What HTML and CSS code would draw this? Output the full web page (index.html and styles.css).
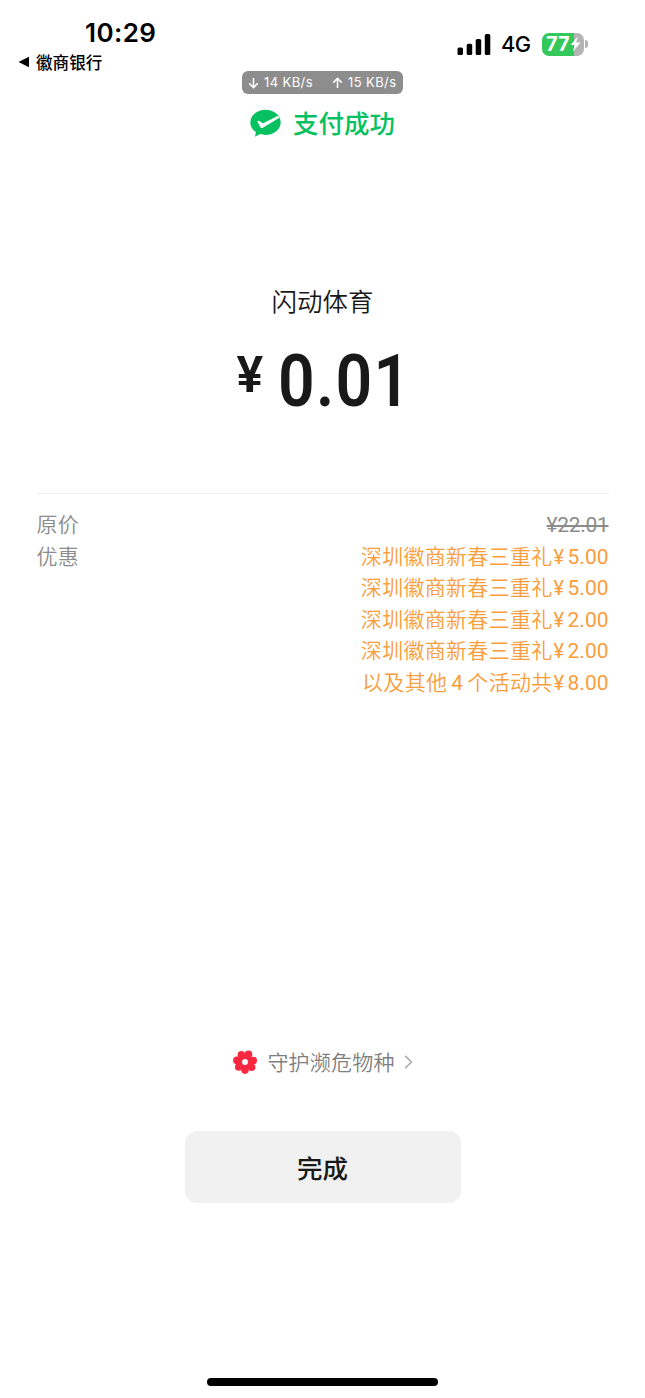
FILE: index.html
```html
<!DOCTYPE html>
<html lang="zh-CN">
<head>
<meta charset="utf-8">
<title>支付成功</title>
<link rel="stylesheet" href="styles.css">
</head>
<body>
<main class="screen">
  <header class="status">
    <div class="status-left">
      <div class="clock">10:29</div>
      <div class="back">
        <svg class="back-arrow" width="12" height="12" viewBox="0 0 12 12"><path d="M0.5 6 11 .8V11.2Z"/></svg>
        <span>徽商银行</span>
      </div>
    </div>
    <div class="status-right">
      <svg class="signal" width="34" height="21" viewBox="0 0 34 21"><rect x="0.5" y="13.5" width="5.5" height="7.5" rx="1.6"/><rect x="9.7" y="9.8" width="5.5" height="11.2" rx="1.6"/><rect x="18.7" y="5" width="5.5" height="16" rx="1.6"/><rect x="27.8" y="0" width="5.5" height="21" rx="1.6"/></svg>
      <span class="network">4G</span>
      <div class="battery">
        <span class="level">77</span>
        <svg class="bolt" width="11" height="16" viewBox="0 0 11 16"><path d="M7.8 .5.5 9H4.6L3 15.5 10.5 6.6H6.2Z"/></svg>
      </div>
      <span class="battery-tip"></span>
    </div>
  </header>

  <div class="speed">
    <svg width="11" height="12" viewBox="0 0 11 12"><path d="M5.5 1V10.5M1.3 6.4 5.5 10.6 9.7 6.4"/></svg>
    <span class="down">14 KB/s</span>
    <svg width="11" height="12" viewBox="0 0 11 12"><path d="M5.5 11V1.5M1.3 5.6 5.5 1.4 9.7 5.6"/></svg>
    <span>15 KB/s</span>
  </div>

  <div class="success">
    <svg width="32" height="29" viewBox="0 0 32 29"><path class="bubble" d="M15.5 .8C7.1.8.3 6.3.3 13.4c0 4 2.2 7.4 5.6 9.7L4.9 27.8 10.4 25.1c1.6.5 3.4.8 5.1.8 8.5 0 15.2-5.6 15.2-12.5S24 .8 15.5 .8Z"/><path class="tick" d="M7.3 12.3Q8.2 11.3 9.3 12L12.3 14Q13 14.3 13.7 14L28 6.8 29.3 8.7 12.9 18.7Q11.2 19.6 10.3 18.2Z"/></svg>
    <h1>支付成功</h1>
  </div>

  <div class="merchant">闪动体育</div>
  <div class="amount"><span class="currency">¥</span><span class="value">0.01</span></div>

  <section class="details">
    <div class="row"><span>原价</span><s class="original">¥22.01</s></div>
    <div class="row">
      <span>优惠</span>
      <ul class="discounts">
        <li>深圳徽商新春三重礼<span class="yen">¥</span><span class="price">5.00</span></li>
        <li>深圳徽商新春三重礼<span class="yen">¥</span><span class="price">5.00</span></li>
        <li>深圳徽商新春三重礼<span class="yen">¥</span><span class="price">2.00</span></li>
        <li>深圳徽商新春三重礼<span class="yen">¥</span><span class="price">2.00</span></li>
        <li>以及其他<span class="count">4</span>个活动共<span class="yen">¥</span><span class="price">8.00</span></li>
      </ul>
    </div>
  </section>

  <div class="charity">
    <svg width="26" height="26" viewBox="-13 -13 26 26"><g class="petals"><circle cx="3.5" cy="-7.6" r="3.8"/><circle cx="8.2" cy="-1.5" r="3.8"/><circle cx="6.6" cy="5.2" r="3.8"/><circle cx="0" cy="8.1" r="3.8"/><circle cx="-6.3" cy="5" r="3.8"/><circle cx="-8.1" cy="-1.6" r="3.8"/><circle cx="-3.6" cy="-7.3" r="3.8"/><circle r="6.5"/></g><circle class="core" r="3"/></svg>
    <span>守护濒危物种</span>
    <svg class="chevron" width="9" height="14" viewBox="0 0 9 14"><path d="M1.2 .9 7.4 7 1.2 13.1"/></svg>
  </div>

  <button class="done" type="button">完成</button>
  <div class="home-bar"></div>
</main>
</body>
</html>
```
FILE: styles.css
```css
* { box-sizing: border-box; }
body {
  margin: 0;
  background: #fff;
  color: #191919;
  font-family: "Noto Sans CJK SC", sans-serif;
}
svg { display: block; flex: none; }
.screen {
  width: 645px;
  height: 1398px;
  display: flex;
  flex-direction: column;
  align-items: center;
  overflow: hidden;
}
.status {
  width: 100%;
  height: 71px;
  display: flex;
  justify-content: space-between;
  color: #000;
}
.clock {
  padding: 17px 0 0 85px;
  font: 600 26px/32px Inter, sans-serif;
  letter-spacing: 0.4px;
}
.back {
  display: flex;
  align-items: center;
  gap: 6px;
  margin-left: 18px;
  font-size: 16.6px;
  font-weight: 500;
  line-height: 26px;
}
.status-right {
  display: flex;
  align-items: center;
  height: 24px;
  margin: 32px 57px 0 0;
}
.network {
  margin-left: 10px;
  width: 41px;
  font: 500 21.8px/24px Inter, sans-serif;
  letter-spacing: -0.5px;
}
.battery {
  width: 42px;
  height: 23px;
  border-radius: 7px;
  display: flex;
  align-items: center;
  padding-left: 4px;
  background: linear-gradient(90deg, #34c759 77%, #b4b4b4 77%);
}
.level {
  color: #fff;
  font: 700 20px/23px Inter, sans-serif;
  width: 24px;
}
.bolt { fill: #fff; }
.battery-tip {
  width: 3px;
  height: 8px;
  margin-left: 1px;
  border-radius: 0 3px 3px 0;
  background: #b4b4b4;
}
.speed {
  width: 161px;
  height: 23px;
  display: flex;
  align-items: center;
  padding-left: 6px;
  border-radius: 6px;
  background: #8d8d8d;
  color: #fff;
  font: 400 13px/23px Inter, sans-serif;
  letter-spacing: 0.4px;
  white-space: nowrap;
}
.speed svg { fill: none; stroke: #fff; stroke-width: 1.5; }
.speed span { margin-left: 5px; width: 48px; }
.speed .down { margin-right: 20px; }
.success {
  height: 40px;
  margin-top: 9px;
  display: flex;
  align-items: center;
  gap: 11px;
  color: #07c160;
}
.success h1 { margin: 0; font-size: 25.5px; line-height: 38px; height: 40px; font-weight: 500; }
.bubble { fill: #07c160; }
.tick { fill: #fff; }
.merchant {
  margin-top: 137px;
  height: 40px;
  font-size: 25.5px;
  line-height: 40px;
  font-weight: 350;
}
.amount {
  width: 172px;
  height: 84px;
  margin-top: 20px;
  display: flex;
  align-items: flex-start;
  font-family: Roboto, sans-serif;
}
.currency { flex: none; width: 41px; font-size: 50px; line-height: 70px; font-weight: 600; }
.value {
  flex: none;
  font-size: 73px;
  line-height: 82px;
  font-weight: 600;
  letter-spacing: 1.5px;
  transform: scaleX(0.88);
  transform-origin: left;
}
.details {
  width: 572px;
  margin-top: 69px;
  padding-top: 14px;
  border-top: 1px solid #ededed;
  color: #8c8c8c;
  font-size: 21px;
  font-weight: 350;
  line-height: 31.5px;
  letter-spacing: 0.3px;
}
.row { display: flex; justify-content: space-between; }
.original { font-family: Roboto, sans-serif; font-weight: 400; letter-spacing: -0.3px; line-height: 35px; height: 31.5px; }
.discounts { margin: 0; padding: 0; list-style: none; color: #fa9d3b; text-align: right; }
.discounts li { height: 31.5px; white-space: nowrap; }
.yen { font-family: Roboto, sans-serif; font-weight: 400; font-size: 20px; display: inline-block; width: 15px; padding-left: 1px; letter-spacing: 0; line-height: 20px; text-align: left; }
.price { font-family: Roboto, sans-serif; font-weight: 400; letter-spacing: 0; }
.count { font-family: Roboto, sans-serif; font-weight: 400; padding: 0 4px; }
.charity {
  height: 32px;
  margin-top: 349px;
  display: flex;
  align-items: center;
  color: #7f7f7f;
  font-size: 21px;
  font-weight: 350;
  line-height: 32px;
  letter-spacing: 0.2px;
}
.charity span { margin: -2px 9px 0; }
.petals { fill: #fa2740; }
.core { fill: #fff; }
.chevron { fill: none; stroke: #aaa; stroke-width: 1.5; }
.done {
  width: 276px;
  height: 72px;
  margin: 53px 0 0;
  padding: 0;
  border: 0;
  border-radius: 12px;
  background: #f1f1f1;
  color: #191919;
  font: 500 25.5px/72px "Noto Sans CJK SC", sans-serif;
}
.home-bar {
  width: 231px;
  height: 8px;
  margin-top: auto;
  margin-bottom: 12px;
  border-radius: 4px;
  background: #000;
}
```
